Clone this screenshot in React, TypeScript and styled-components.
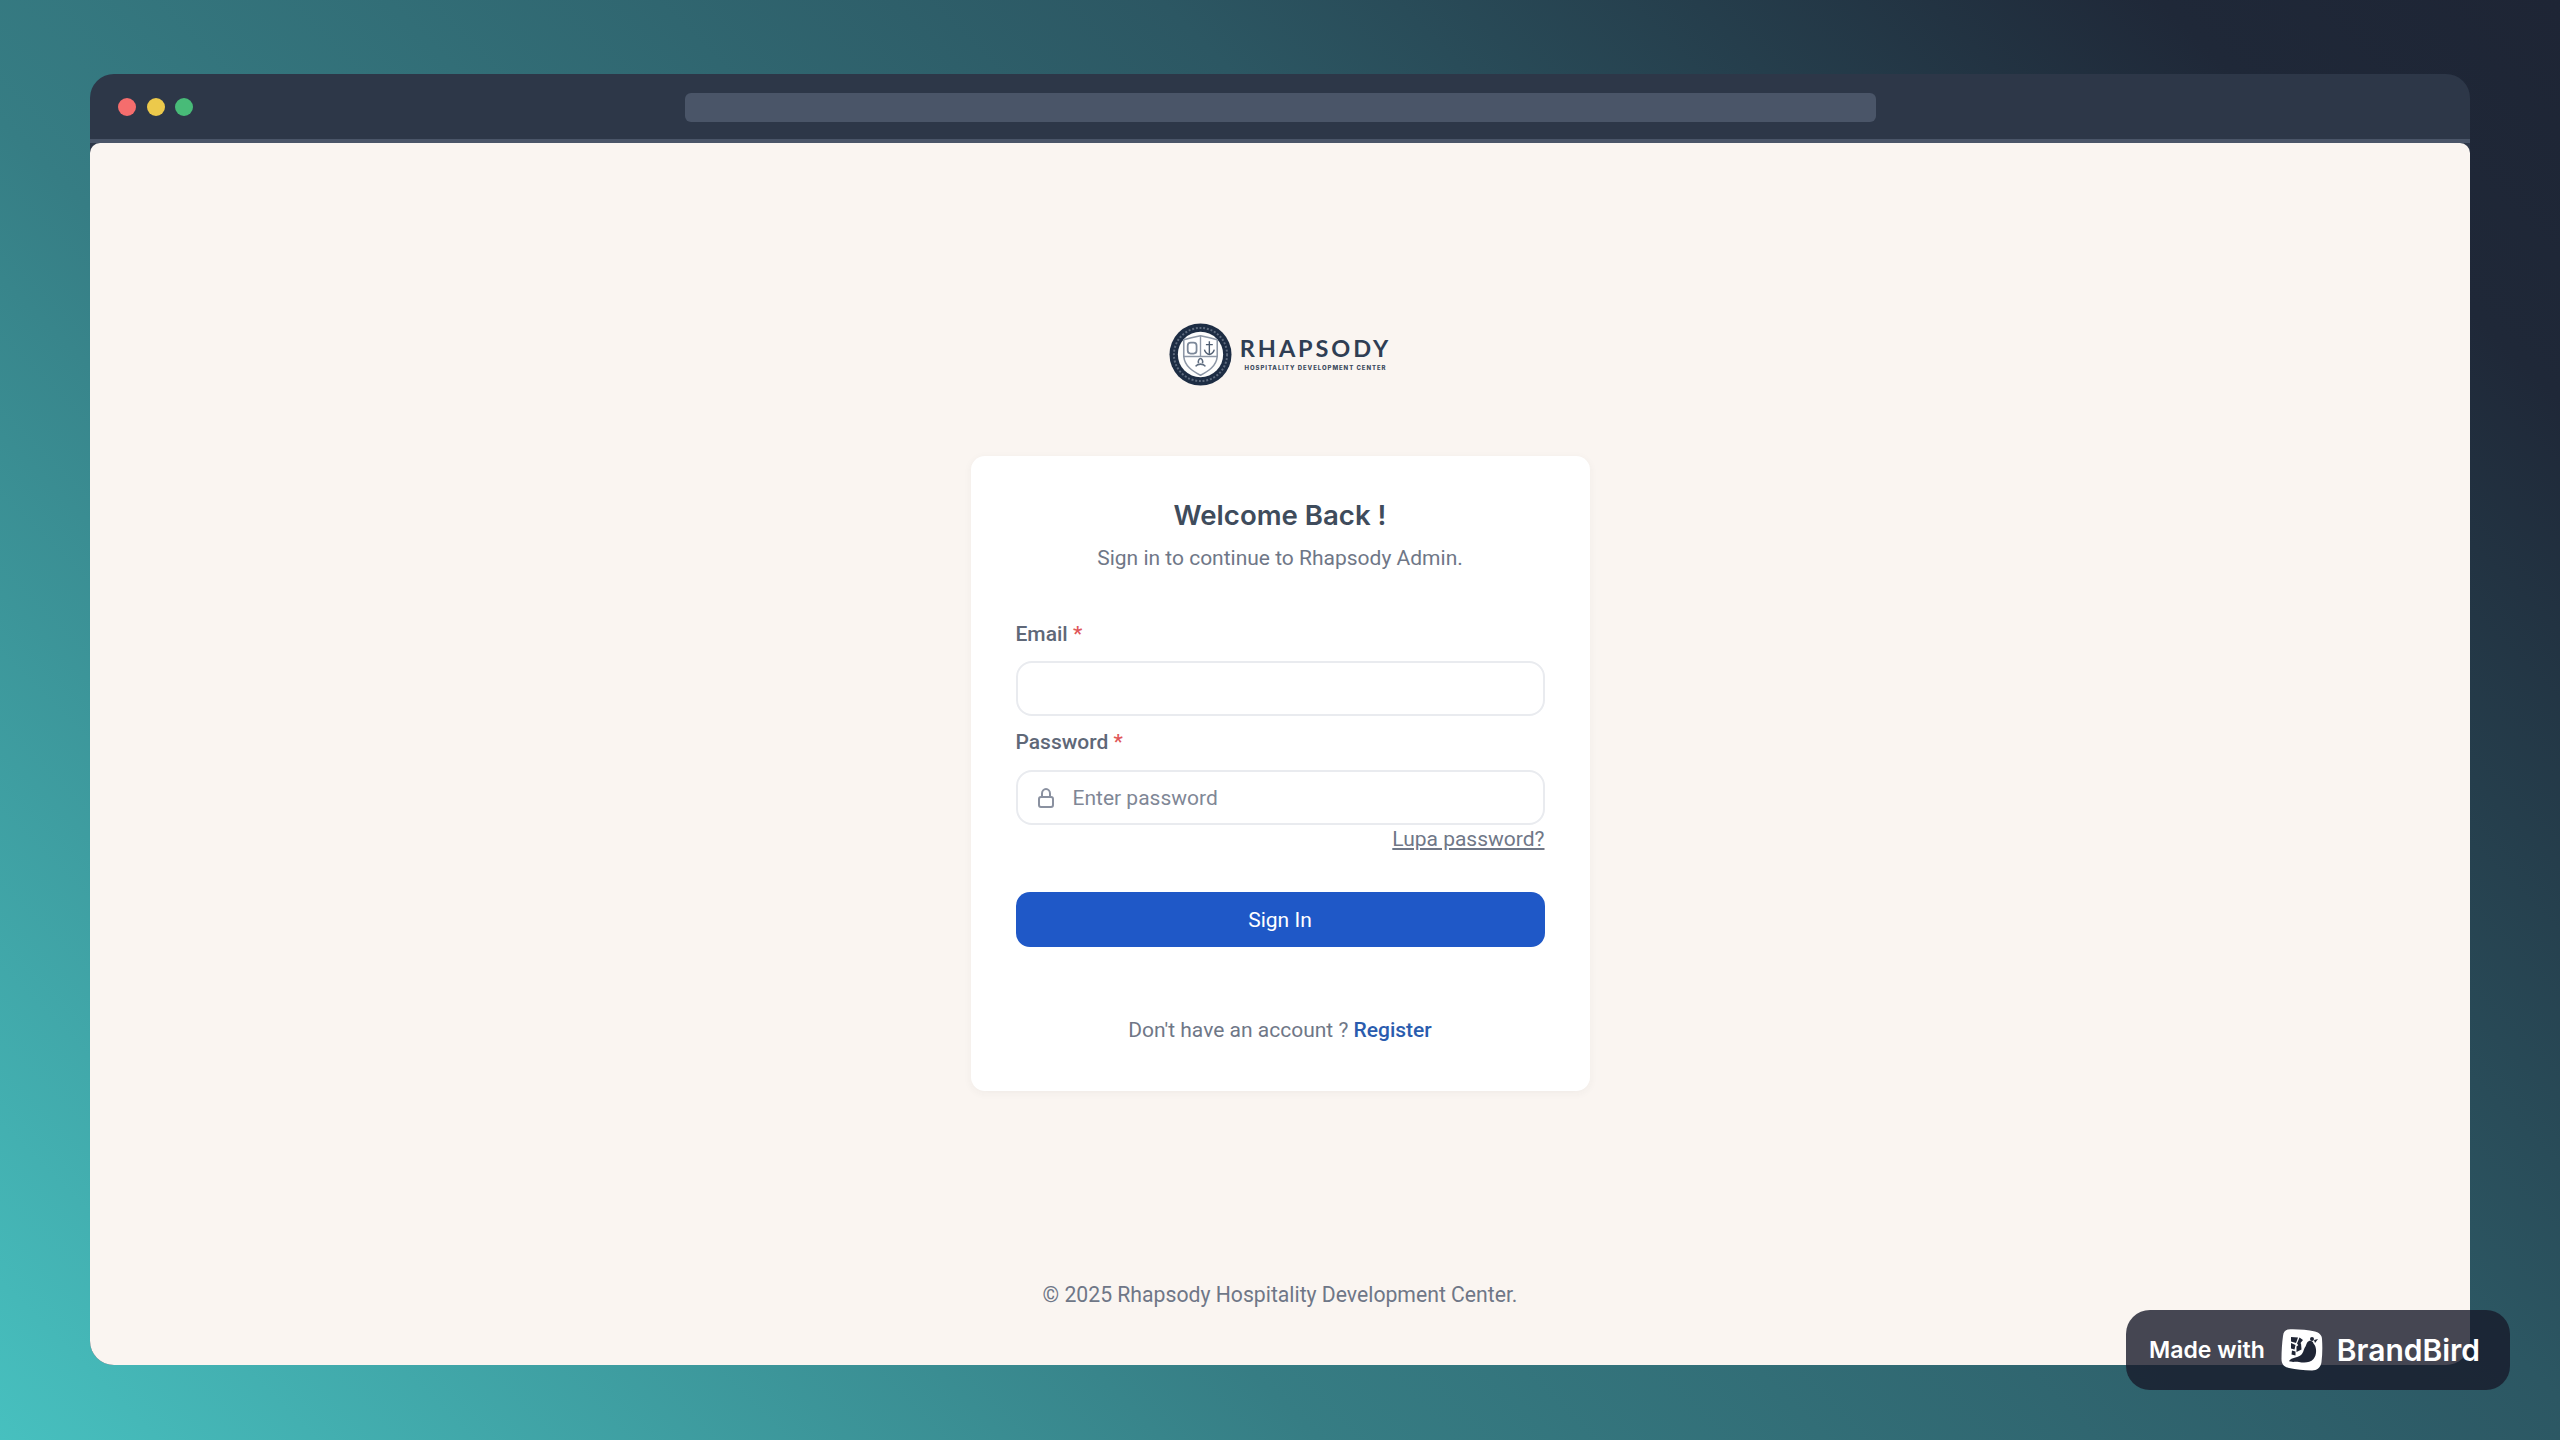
import React from "react";
import styled, { createGlobalStyle } from "styled-components";

const BODY_FONT = `Roboto, "Liberation Sans", sans-serif`;
const BLUE = `#1f58c7`;
const BORDER_COLOR = `#e9ebef`;

const GlobalStyle = createGlobalStyle`
  * {
    box-sizing: border-box;
  }

  html,
  body {
    margin: 0;
    height: 100%;
  }

  body {
    font-family: ${BODY_FONT};
    overflow: hidden;
  }
`;

const Backdrop = styled.div`
  position: relative;
  width: 2560px;
  height: 1440px;
  padding: 74px 90px 75px;
  display: flex;
  background: linear-gradient(
    45deg,
    #47c0bf 0%,
    #367d84 33%,
    #2c5763 65%,
    #1f2838 90%,
    #1e2535 100%
  );
`;

const BrowserWindow = styled.div`
  flex: 1;
  display: flex;
  flex-direction: column;
  border-radius: 24px;
  overflow: hidden;
  background: #2d3748;
`;

const ChromeBar = styled.header`
  height: 69px;
  flex-shrink: 0;
  position: relative;
  display: flex;
  align-items: center;
  justify-content: center;
  padding-bottom: 5px;
  border-bottom: 4px solid #4a5568;
`;

const Dots = styled.div`
  position: absolute;
  left: 28px;
  top: 24px;
  display: flex;
  gap: 10.5px;
`;

const Dot = styled.span<{ $color: string }>`
  width: 18px;
  height: 18px;
  border-radius: 50%;
  background: ${(p) => p.$color};
`;

const AddressBar = styled.div`
  width: 1191px;
  height: 29px;
  margin-top: 7px;
  border-radius: 6px;
  background: #4a5568;
`;

const Page = styled.main`
  flex: 1;
  display: flex;
  flex-direction: column;
  align-items: center;
  padding: 180px 0 57px;
  background: #faf5f1;
  border-radius: 10px 10px 0 0;
`;

const LogoRow = styled.div`
  display: flex;
  align-items: center;
  gap: 8px;
  height: 63px;
`;

const LogoText = styled.div`
  display: flex;
  flex-direction: column;
  align-items: center;
  margin-top: -3px;
`;

const LogoName = styled.div`
  font-family: Lato, sans-serif;
  font-weight: 700;
  font-size: 23.5px;
  line-height: 26px;
  letter-spacing: 2.9px;
  color: #2f3e54;
`;

const LogoTagline = styled.div`
  font-family: Inter, sans-serif;
  font-weight: 800;
  font-size: 6px;
  line-height: 8px;
  letter-spacing: 0.95px;
  margin-top: 3px;
  color: #3c4a5e;
`;

const Card = styled.section`
  width: 619px;
  height: 635px;
  margin-top: 70px;
  padding: 45px 45px 48px;
  background: #fff;
  border-radius: 14px;
  box-shadow: 0 2px 8px rgba(60, 60, 60, 0.05);
`;

const Title = styled.h1`
  margin: 0;
  text-align: center;
  font-family: Inter, sans-serif;
  font-weight: 600;
  font-size: 27.6px;
  line-height: 28px;
  color: #3f4c5c;
`;

const Subtitle = styled.p`
  margin: 15px 0 0;
  text-align: center;
  font-size: 21px;
  line-height: 28px;
  color: #6f7787;
`;

const Label = styled.label<{ $top: number }>`
  display: block;
  margin-top: ${(p) => p.$top}px;
  font-size: 21px;
  font-weight: 500;
  line-height: 28px;
  color: #5f6878;
`;

const Required = styled.span`
  color: #e0575a;
`;

const InputBox = styled.div<{ $top: number }>`
  display: flex;
  align-items: center;
  gap: 18px;
  height: 55px;
  margin-top: ${(p) => p.$top}px;
  padding: 0 19px;
  border: 2px solid ${BORDER_COLOR};
  border-radius: 16px;
  background: #fff;
`;

const Field = styled.input`
  flex: 1;
  min-width: 0;
  border: 0;
  outline: 0;
  padding: 0;
  background: transparent;
  font-family: ${BODY_FONT};
  font-size: 21px;
  color: #3b4858;

  &::placeholder {
    color: #7f8796;
    opacity: 1;
  }
`;

const ForgotRow = styled.div`
  text-align: right;
  font-size: 21px;
  line-height: 28px;
`;

const ForgotLink = styled.a`
  color: #6f7787;
  text-decoration: underline;
`;

const SubmitButton = styled.button`
  display: block;
  width: 100%;
  height: 55px;
  margin-top: 39px;
  border: 0;
  border-radius: 14px;
  background: ${BLUE};
  color: #fff;
  font-family: ${BODY_FONT};
  font-size: 21px;
  font-weight: 400;
`;

const RegisterLine = styled.p`
  margin: 69px 0 0;
  text-align: center;
  font-size: 21px;
  line-height: 28px;
  color: #6f7787;
`;

const RegisterLink = styled.a`
  color: #2a5cae;
  font-weight: 500;
`;

const Copyright = styled.footer`
  margin-top: auto;
  font-size: 21.2px;
  line-height: 28px;
  color: #6f7787;
  transform: translateY(1px);
`;

const Badge = styled.aside`
  position: absolute;
  right: 50px;
  bottom: 50px;
  width: 384px;
  height: 80px;
  padding-left: 23px;
  display: flex;
  align-items: center;
  border-radius: 24px;
  background: rgba(24, 26, 42, 0.8);
  color: #fff;
  font-family: Inter, sans-serif;
  font-weight: 600;
`;

const BadgeLabel = styled.span`
  font-size: 23px;
  margin-right: 16px;
`;

const BadgeName = styled.span`
  font-size: 30px;
  margin-left: 14px;
`;

function LogoMark(): JSX.Element {
  return (
    <svg width="63" height="63" viewBox="0 0 64 64">
      <circle cx="32" cy="32" r="31.5" fill="#1d2d44" />
      <circle cx="32" cy="32" r="27" fill="none" stroke="#5e6b7e" strokeWidth="2" strokeDasharray="2 1.8" />
      <circle cx="32" cy="32" r="23" fill="#fdfdfc" />
      <path
        d="M15 17 C22 15 27 14 32 13 C37 14 42 15 49 17 L49 34 C48 44 40 49 32 53 C24 49 16 44 15 34 Z"
        fill="#fff"
        stroke="#8d97a6"
        strokeWidth="1.6"
      />
      <path d="M32 13 V34 M15 34 H49" stroke="#8d97a6" strokeWidth="1.4" fill="none" />
      <rect x="19" y="20" width="9" height="11" rx="3" fill="none" stroke="#7c8899" strokeWidth="1.8" />
      <path
        d="M41 18.5 V31 M37.5 22 H44.5 M36 27 C37 31 39 31.5 41 32 C43 31.5 45 31 46 27"
        fill="none"
        stroke="#4d5c70"
        strokeWidth="1.4"
      />
      <path
        d="M27 44 C29 41 35 41 37 44 M30 41 C29 38 31 36 32 36 C33 36 35 38 34 41"
        fill="none"
        stroke="#5f6d80"
        strokeWidth="1.6"
      />
    </svg>
  );
}

function LockIcon(): JSX.Element {
  return (
    <svg width="18" height="22" viewBox="0 0 18 22" fill="none" stroke="#8a91a0" strokeWidth="2">
      <rect x="2" y="10" width="14" height="10" rx="2" />
      <path d="M5 10 V6.5 C5 4 6.8 2 9 2 C11.2 2 13 4 13 6.5 V10" />
    </svg>
  );
}

function BirdIcon(): JSX.Element {
  return (
    <svg width="42" height="44" viewBox="0 0 42 44">
      <path
        d="M7 1.5 C16 1 26 2 34 3.5 C38 4.5 41 7 41 11 C41.5 18 41.5 26 40.5 34 C40 39 36 42.5 31 42.5 C23 42.5 15 41.5 8 40 C3 39 0.5 36 0.5 31 C0.5 23 1 15 2 8 C2.5 4 4 2 7 1.5 Z"
        fill="#fff"
      />
      <path
        d="M10 9 L17 9.5 L15 15 L10 13.5 Z M18.5 9.5 L22 12 L17.5 17.5 L16 15.5 Z M10 15 L14.5 17 L13.5 21.5 L10 20.5 Z M15.5 18.5 L20 15 L20.5 21.5 L15.5 24 Z M11 22.5 L14.5 23.5 L14.5 27.5 L10.5 26.5 Z"
        fill="#1f2535"
      />
      <path
        d="M8 33 C11 29 16 30 20 27 C23 24 22.5 21 24.5 18.5 C25.5 16.5 25.5 14 28 13 C30 12.5 32 13.5 32.5 15.5 C36 19 36 27 32.5 31 C29 35 23 35 18 34 C14 33.5 10 34.5 8 33 Z"
        fill="#1f2535"
      />
      <circle cx="31" cy="11" r="2" fill="#1f2535" />
      <path d="M33 12 L37 11 L34 15 Z" fill="#1f2535" />
    </svg>
  );
}

export default function App(): JSX.Element {
  return (
    <>
      <GlobalStyle />
      <Backdrop>
        <BrowserWindow>
          <ChromeBar>
            <Dots>
              <Dot $color="#f56d6d" />
              <Dot $color="#ecc94b" />
              <Dot $color="#48bb78" />
            </Dots>
            <AddressBar />
          </ChromeBar>
          <Page>
            <LogoRow>
              <LogoMark />
              <LogoText>
                <LogoName>RHAPSODY</LogoName>
                <LogoTagline>HOSPITALITY DEVELOPMENT CENTER</LogoTagline>
              </LogoText>
            </LogoRow>
            <Card>
              <Title>Welcome Back !</Title>
              <Subtitle>Sign in to continue to Rhapsody Admin.</Subtitle>
              <Label $top={48}>
                Email <Required>*</Required>
              </Label>
              <InputBox $top={13}>
                <Field type="email" />
              </InputBox>
              <Label $top={12}>
                Password <Required>*</Required>
              </Label>
              <InputBox $top={14}>
                <LockIcon />
                <Field type="password" placeholder="Enter password" />
              </InputBox>
              <ForgotRow>
                <ForgotLink>Lupa password?</ForgotLink>
              </ForgotRow>
              <SubmitButton>Sign In</SubmitButton>
              <RegisterLine>
                Don't have an account ? <RegisterLink>Register</RegisterLink>
              </RegisterLine>
            </Card>
            <Copyright>© 2025 Rhapsody Hospitality Development Center.</Copyright>
          </Page>
        </BrowserWindow>
        <Badge>
          <BadgeLabel>Made with</BadgeLabel>
          <BirdIcon />
          <BadgeName>BrandBird</BadgeName>
        </Badge>
      </Backdrop>
    </>
  );
}
